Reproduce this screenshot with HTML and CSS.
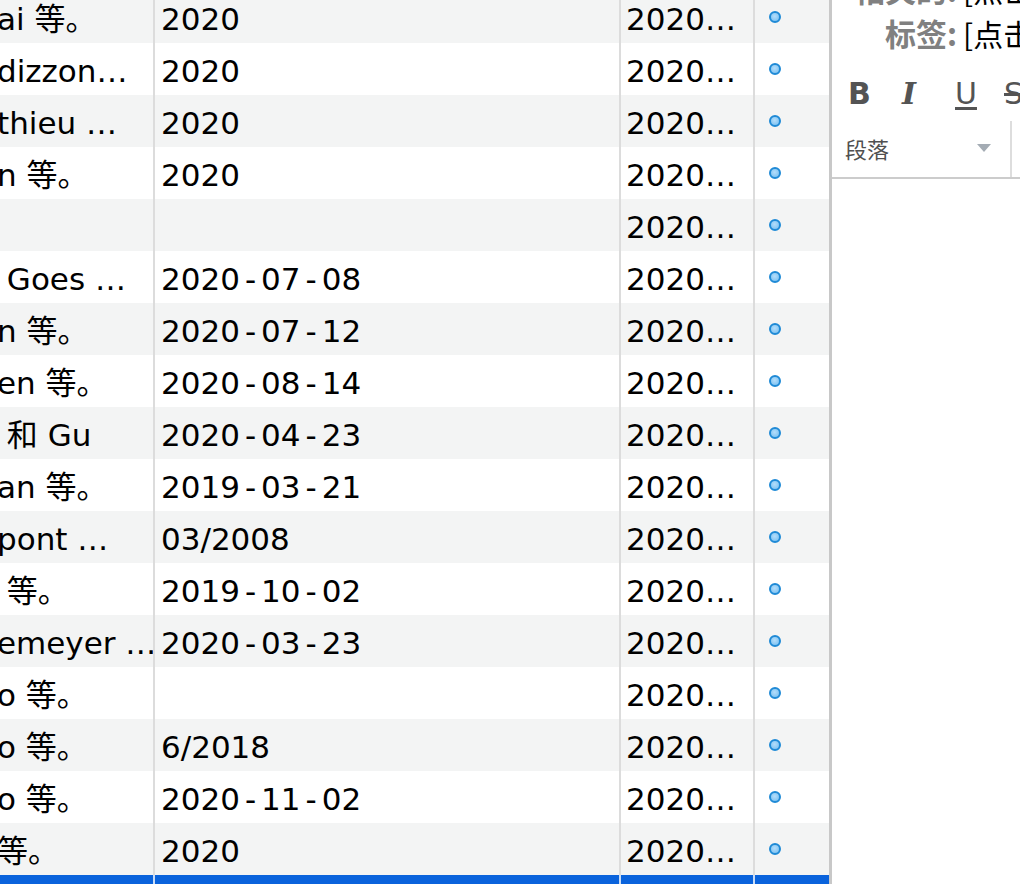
FILE: index.html
```html
<!DOCTYPE html>
<html lang="zh">
<head>
<meta charset="utf-8">
<title>Items</title>
<link rel="stylesheet" href="styles.css">
</head>
<body>
<div class="app">
  <div class="list">
    <div class="rows">
      <div class="row odd"><div class="c1">ai 等。</div><div class="c2">2020</div><div class="c3">2020…</div><div class="c4"><span class="dot"></span></div></div>
      <div class="row"><div class="c1">dizzon…</div><div class="c2">2020</div><div class="c3">2020…</div><div class="c4"><span class="dot"></span></div></div>
      <div class="row odd"><div class="c1">thieu …</div><div class="c2">2020</div><div class="c3">2020…</div><div class="c4"><span class="dot"></span></div></div>
      <div class="row"><div class="c1">n 等。</div><div class="c2">2020</div><div class="c3">2020…</div><div class="c4"><span class="dot"></span></div></div>
      <div class="row odd"><div class="c1"></div><div class="c2"></div><div class="c3">2020…</div><div class="c4"><span class="dot"></span></div></div>
      <div class="row"><div class="c1"> Goes …</div><div class="c2">2020<span class="dash">-</span>07<span class="dash">-</span>08</div><div class="c3">2020…</div><div class="c4"><span class="dot"></span></div></div>
      <div class="row odd"><div class="c1">n 等。</div><div class="c2">2020<span class="dash">-</span>07<span class="dash">-</span>12</div><div class="c3">2020…</div><div class="c4"><span class="dot"></span></div></div>
      <div class="row"><div class="c1">en 等。</div><div class="c2">2020<span class="dash">-</span>08<span class="dash">-</span>14</div><div class="c3">2020…</div><div class="c4"><span class="dot"></span></div></div>
      <div class="row odd"><div class="c1"> 和 Gu</div><div class="c2">2020<span class="dash">-</span>04<span class="dash">-</span>23</div><div class="c3">2020…</div><div class="c4"><span class="dot"></span></div></div>
      <div class="row"><div class="c1">an 等。</div><div class="c2">2019<span class="dash">-</span>03<span class="dash">-</span>21</div><div class="c3">2020…</div><div class="c4"><span class="dot"></span></div></div>
      <div class="row odd"><div class="c1">pont …</div><div class="c2">03/2008</div><div class="c3">2020…</div><div class="c4"><span class="dot"></span></div></div>
      <div class="row"><div class="c1"> 等。</div><div class="c2">2019<span class="dash">-</span>10<span class="dash">-</span>02</div><div class="c3">2020…</div><div class="c4"><span class="dot"></span></div></div>
      <div class="row odd"><div class="c1">emeyer …</div><div class="c2">2020<span class="dash">-</span>03<span class="dash">-</span>23</div><div class="c3">2020…</div><div class="c4"><span class="dot"></span></div></div>
      <div class="row"><div class="c1">o 等。</div><div class="c2"></div><div class="c3">2020…</div><div class="c4"><span class="dot"></span></div></div>
      <div class="row odd"><div class="c1">o 等。</div><div class="c2">6/2018</div><div class="c3">2020…</div><div class="c4"><span class="dot"></span></div></div>
      <div class="row"><div class="c1">o 等。</div><div class="c2">2020<span class="dash">-</span>11<span class="dash">-</span>02</div><div class="c3">2020…</div><div class="c4"><span class="dot"></span></div></div>
      <div class="row odd"><div class="c1">等。</div><div class="c2">2020</div><div class="c3">2020…</div><div class="c4"><span class="dot"></span></div></div>
      <div class="row selected"><div class="c1"></div><div class="c2"></div><div class="c3"></div><div class="c4"></div></div>
    </div>
  </div>
  <div class="panel">
    <div class="fields">
      <div class="field"><span class="label">相关的:</span><span class="value">[点击此处]</span></div>
      <div class="field"><span class="label">标签:</span><span class="value">[点击此处]</span></div>
    </div>
    <div class="toolbar">
      <div class="tb-row">
        <span class="tb-btn b">B</span>
        <span class="tb-btn i">I</span>
        <span class="tb-btn u">U</span>
        <span class="tb-btn s">S</span>
      </div>
      <div class="tb-row2">
        <div class="select"><span class="sel-text">段落</span><span class="caret"></span></div>
        <div class="vsep"></div>
      </div>
    </div>
  </div>
</div>
</body>
</html>
```
FILE: styles.css
```css
html, body {
  margin: 0;
  padding: 0;
  background: #ffffff;
}
body {
  width: 1020px;
  height: 884px;
  overflow: hidden;
  font-family: "DejaVu Sans", "Noto Sans CJK SC", sans-serif;
  color: #000;
}
.app {
  display: flex;
  height: 884px;
}
.list {
  width: 829px;
  flex: none;
  overflow: hidden;
}
.rows {
  margin-top: -9px;
}
.row {
  display: flex;
  height: 52px;
  background: #ffffff;
  font-size: 31px;
  line-height: 56px;
  white-space: pre;
}
.row.odd {
  background: #f3f4f4;
}
.row.selected {
  background: #0a63dc;
}
.row > div {
  overflow: hidden;
  box-sizing: border-box;
}
.c1 {
  width: 153px;
  text-indent: -3px;
}
.c2 {
  width: 466px;
  border-left: 2px solid #dcdcdc;
  padding-left: 6px;
}
.dash {
  padding: 0 5px;
}
.c3 {
  width: 134px;
  border-left: 2px solid #dcdcdc;
  padding-left: 5px;
}
.c4 {
  flex: 1;
  border-left: 2px solid #dcdcdc;
  display: flex;
  align-items: center;
  padding-left: 14px;
}
.row.selected > div {
  border-left-color: #c9dcf6;
}
.dot {
  width: 8px;
  height: 8px;
  border-radius: 50%;
  border: 2px solid #1f8ad6;
  background: radial-gradient(circle at 45% 40%, #b4defb 0%, #86c6f3 70%);
}
.panel {
  flex: 1;
  border-left: 3px solid #c8c8c8;
  overflow: hidden;
  display: flex;
  flex-direction: column;
}
.fields {
  margin-top: -33px;
}
.field {
  display: flex;
  height: 44px;
  line-height: 44px;
  font-size: 30px;
  font-family: "Noto Sans CJK SC", "DejaVu Sans", sans-serif;
  white-space: nowrap;
}
.label {
  width: 125px;
  flex: none;
  text-align: right;
  color: #808080;
  font-weight: bold;
  font-size: 31px;
}
.value {
  padding-left: 6px;
  color: #000;
}
.toolbar {
  margin-top: 14px;
  border-bottom: 2px solid #cccccc;
}
.tb-row {
  display: flex;
  height: 50px;
  align-items: center;
  padding-left: 16px;
  color: #545454;
}
.tb-btn {
  width: 52px;
  flex: none;
  font-size: 30px;
  line-height: 50px;
}
.tb-btn.b {
  font-family: "DejaVu Sans", sans-serif;
  font-weight: bold;
}
.tb-btn.i {
  font-family: "DejaVu Serif", serif;
  font-style: italic;
  font-weight: bold;
  padding-left: 2px;
}
.tb-btn.u {
  font-family: "DejaVu Sans", sans-serif;
  text-decoration: underline;
  text-decoration-thickness: 3px;
  text-underline-offset: 3px;
  margin-left: 1px;
}
.tb-btn.s {
  font-family: "DejaVu Sans", sans-serif;
  text-decoration: line-through;
  text-decoration-thickness: 3px;
  margin-left: -3px;
}
.tb-row2 {
  display: flex;
  height: 58px;
  align-items: stretch;
}
.select {
  width: 178px;
  flex: none;
  display: flex;
  align-items: center;
  padding-left: 13px;
  box-sizing: border-box;
}
.sel-text {
  font-family: "Noto Sans CJK SC", sans-serif;
  font-size: 22px;
  color: #505050;
  flex: 1;
}
.caret {
  width: 0;
  height: 0;
  border-left: 7px solid transparent;
  border-right: 7px solid transparent;
  border-top: 8px solid #a4acb4;
  margin-right: 19px;
}
.vsep {
  width: 2px;
  background: #dddddd;
  margin-top: 2px;
}
```
